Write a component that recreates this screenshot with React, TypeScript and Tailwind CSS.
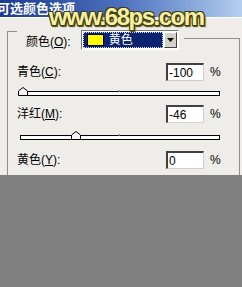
const cjk = { fontFamily: '"Liberation Sans", "Noto Sans CJK SC", sans-serif' }

function Thumb() {
    return (
        <svg width="10" height="9" viewBox="0 0 10 9" className="block">
            <path d="M0.5 8.5 V4 L5 0.5 L9.5 4 V8.5 Z" fill="#f4f4f4" stroke="#000" strokeWidth="1" />
        </svg>
    )
}

function Slider({ pos }: { pos: number }) {
    return (
        <div className="relative ml-[12px] h-[9px] w-[200px]">
            <div className="absolute left-0 right-0 top-[4px] h-[5px] border border-black bg-white" />
            <div className="absolute left-[99px] top-[3px] h-[2px] w-px bg-[#808080]" />
            <div className="absolute top-0" style={{ left: pos - 3 }}>
                <Thumb />
            </div>
        </div>
    )
}

function Row({ label, u, value }: { label: string; u: string; value: string }) {
    return (
        <div className="flex h-[18px] items-center">
            <span className="ml-[9px] w-[149px] text-[12px] text-black">
                {label}(<span className="underline">{u}</span>):
            </span>
            <div className="flex h-[18px] w-[38px] items-center border-t-2 border-l-2 border-t-[#404040] border-l-[#404040] border-b border-r border-b-[#d4d0c8] border-r-[#d4d0c8] bg-white pl-[1px] text-[12px] text-black">
                {value}
            </div>
            <span className="ml-[6px] text-[12px] text-black">%</span>
        </div>
    )
}

export default function App() {
    return (
        <div className="relative flex h-[287px] w-[242px] flex-col overflow-hidden bg-[#808080]" style={cjk}>
            {/* title bar */}
            <div className="flex h-[17px] items-center bg-gradient-to-r from-[#1a3a92] via-[#4d70bd] to-[#b4cff0]">
                <span className="-ml-[3px] text-[13px] font-bold leading-none text-white">可选颜色选项</span>
            </div>
            <div className="h-px bg-white" />

            {/* dialog body */}
            <div className="h-[157px] overflow-hidden bg-[#eeede9] pt-[12px]">
                <div className="ml-[7px] mr-[2px] flex flex-col">
                    {/* header row of group box */}
                    <div className="flex h-[20px]">
                        <div className="mt-[1px] h-[19px] w-[10px] border-l border-t border-[#8e8e8e]" />
                        <span className="ml-[9px] mt-[3px] text-[12px] text-black">
                            颜色(<span className="underline">O</span>):
                        </span>
                        <div className="ml-[10px] flex h-[20px] w-[98px] border-t border-l border-[#7a7a7a] border-b border-r border-b-white border-r-white bg-white">
                            <div className="m-[1px] flex flex-1 items-center bg-[#0c2470] outline-1 outline-dotted outline-[#d8d8d8] -outline-offset-1">
                                <div className="ml-[4px] h-[12px] w-[17px] border border-black bg-[#ffff00]" />
                                <span className="ml-[5px] text-[12px] text-white">黄色</span>
                            </div>
                            <div className="my-[1px] mr-[1px] flex w-[13px] items-center justify-center border border-t-white border-l-white border-b-[#404040] border-r-[#404040] bg-[#d4d0c8]">
                                <svg width="7" height="4" viewBox="0 0 7 4">
                                    <path d="M0 0 H7 L3.5 4 Z" fill="#000" />
                                </svg>
                            </div>
                        </div>
                        <div className="ml-[5px] mt-[8px] h-[30px] flex-1 border-t border-r border-[#8e8e8e]" />
                    </div>

                    {/* group body */}
                    <div className="flex flex-col border-l border-r border-[#8e8e8e] pt-[13px] pb-[20px]">
                        <Row label="青色" u="C" value="-100" />
                        <div className="mt-[6px]">
                            <Slider pos={1} />
                        </div>
                        <div className="mt-[9px]">
                            <Row label="洋红" u="M" value="-46" />
                        </div>
                        <div className="mt-[8px]">
                            <Slider pos={54} />
                        </div>
                        <div className="mt-[11px]">
                            <Row label="黄色" u="Y" value="0" />
                        </div>
                    </div>
                </div>
            </div>

            {/* watermark */}
            <div
                className="absolute left-[49px] top-[5px] text-[24px] font-bold leading-none tracking-[-1.5px] text-[#f7f0a4]"
                style={{
                    fontFamily: '"Liberation Sans", sans-serif',
                    textShadow:
                        '1px 1px 0 #3f3d12, -1px -1px 0 #3f3d12, 1px -1px 0 #3f3d12, -1px 1px 0 #3f3d12, 2px 2px 1px #5a5520, 0 2px 1px #3f3d12',
                }}
            >
                www.68ps.com
            </div>
        </div>
    )
}
